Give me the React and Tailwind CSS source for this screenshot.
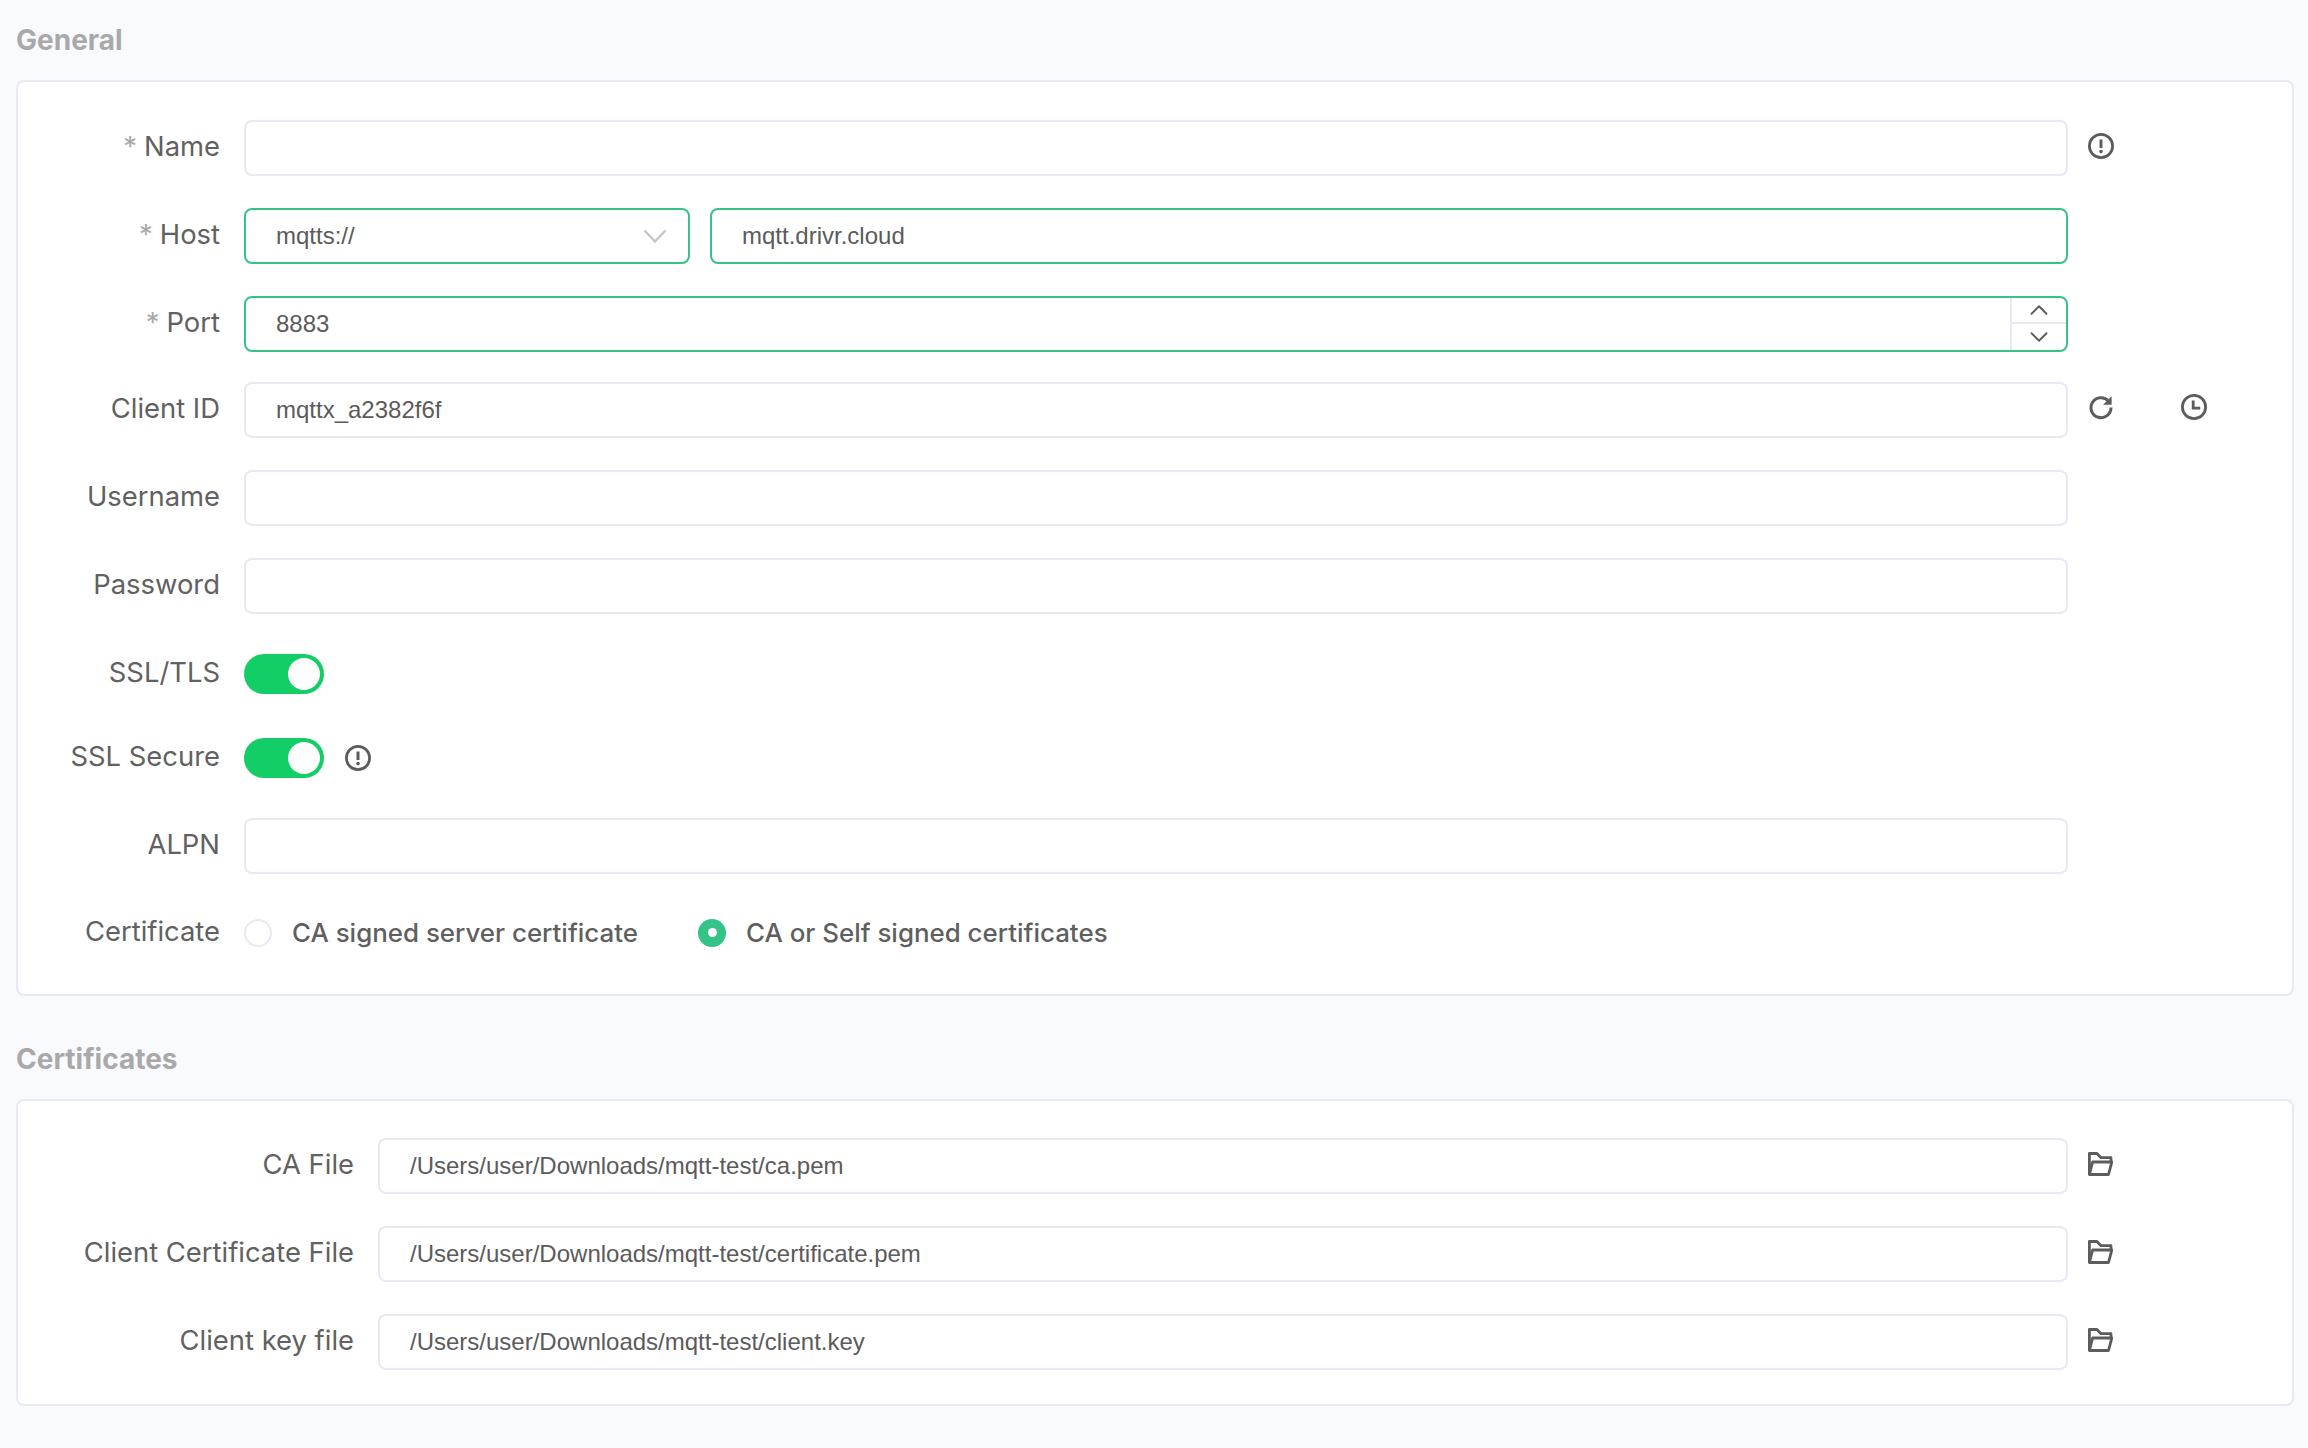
import { ChevronDown, ChevronUp } from 'lucide-react';

function InfoIcon({ className }) {
  return (
    <svg className={className} width="28" height="28" viewBox="0 0 28 28" fill="none" stroke="#5c5c5c" strokeWidth="2.8">
      <circle cx="14" cy="14" r="11.6" />
      <path d="M14 7.5v8.5" strokeWidth="3" />
      <circle cx="14" cy="19.6" r="1.8" fill="#5c5c5c" stroke="none" />
    </svg>
  );
}

function RefreshIcon() {
  return (
    <svg className="-mt-[6px]" width="28" height="28" viewBox="0 0 28 28" fill="none">
      <path d="M21.6 8.2A10 10 0 1 0 24 14.6" stroke="#5c5c5c" strokeWidth="3" />
      <path d="M24.6 3.2v8.6H16z" fill="#5c5c5c" />
    </svg>
  );
}

function ClockIcon() {
  return (
    <svg className="-mt-[6px]" width="28" height="28" viewBox="0 0 28 28" fill="none" stroke="#5c5c5c" strokeWidth="2.8">
      <circle cx="14" cy="14" r="11.6" />
      <path d="M13.2 7.5v7.6h7" strokeWidth="2.8" />
    </svg>
  );
}

function FolderIcon() {
  return (
    <svg className="ml-[1px] -mt-[5px]" width="25" height="24" viewBox="0 0 25 24" fill="none" stroke="#5c5c5c" strokeWidth="2.8" strokeLinejoin="round">
      <path d="M1.4 22.5V1.5H9l4 4.2h10V10" />
      <path d="M1.4 22.5L4.6 10h19.2l-3.3 12.5z" />
    </svg>
  );
}

function Input({ value, active, className }) {
  return (
    <div
      className={`h-[56px] flex items-center pl-[30px] bg-white rounded-lg border-2 font-['Liberation_Sans',sans-serif] text-[24px] text-[#5b5b5b] ${active ? 'border-[#34c388]' : 'border-[#e8eaf3]'} ${className || ''}`}
    >
      {value}
    </div>
  );
}

function Toggle() {
  return (
    <div className="w-[80px] h-[40px] rounded-full bg-[#13ce66] flex items-center justify-end pr-[4px]">
      <div className="w-[32px] h-[32px] rounded-full bg-white" />
    </div>
  );
}

function Label({ children, required, width }) {
  return (
    <div className={`${width} shrink-0 flex justify-end h-[40px] leading-[37px] text-[27.4px] text-[#616161]`}>
      {required && <span className="text-[#a9a9a9] mr-[7px]">*</span>}
      {children}
    </div>
  );
}

function Row({ label, required, labelWidth = 'w-[202px] mr-[24px]', after, className, children }) {
  return (
    <div className={`flex items-center ${className || ''}`}>
      <Label required={required} width={labelWidth}>{label}</Label>
      <div className="flex-1 min-w-0">{children}</div>
      <div className="w-[224px] shrink-0 flex items-center pl-[19px]">{after}</div>
    </div>
  );
}

function Radio({ checked, children, className }) {
  return (
    <div className={`flex items-center ${className || ''}`}>
      {checked ? (
        <div className="w-[28px] h-[28px] rounded-full bg-[#34c388] flex items-center justify-center">
          <div className="w-[9px] h-[9px] rounded-full bg-white" />
        </div>
      ) : (
        <div className="w-[28px] h-[28px] rounded-full border-2 border-[#e8eaf3] bg-white" />
      )}
      <span className="ml-[20px] text-[25.9px] font-medium text-[#5f5f5f]">{children}</span>
    </div>
  );
}

export default function App() {
  return (
    <div className="min-h-screen bg-[#f9fafe] pl-[16px] pr-[14px] pt-[22px] font-['Inter',sans-serif]">
      <h2 className="h-[36px] leading-[36px] text-[28px] font-bold text-[#a9a9a9]">General</h2>
      <section className="mt-[22px] h-[916px] bg-white border-2 border-[#e8eaf3] rounded-lg pt-[38px]">
        <Row label="Name" required className="mb-[32px]" after={<InfoIcon className="-mt-[5px]" />}>
          <Input />
        </Row>
        <Row label="Host" required className="mb-[32px]">
          <div className="flex gap-[20px]">
            <div className="relative w-[446px] shrink-0">
              <Input value="mqtts://" active />
              <svg className="absolute right-[23px] top-[21px]" width="24" height="14" viewBox="0 0 24 14" fill="none" stroke="#c6c6c6" strokeWidth="2.4">
                <path d="M1.5 1.5L12 12.5 22.5 1.5" />
              </svg>
            </div>
            <Input value="mqtt.drivr.cloud" active className="flex-1" />
          </div>
        </Row>
        <Row label="Port" required className="mb-[30px]">
          <div className="relative">
            <Input value="8883" active />
            <div className="absolute right-[2px] top-[2px] bottom-[2px] w-[56px] border-l-2 border-[#e8eaf3] flex flex-col">
              <div className="h-[26px] flex items-center justify-center border-b-2 border-[#e8eaf3]">
                <ChevronUp className="shrink-0" size={30} strokeWidth={1.5} color="#5c5c5c" />
              </div>
              <div className="h-[26px] flex items-center justify-center">
                <ChevronDown className="shrink-0" size={30} strokeWidth={1.5} color="#5c5c5c" />
              </div>
            </div>
          </div>
        </Row>
        <Row
          label="Client ID"
          className="mb-[32px]"
          after={
            <div className="flex items-center gap-[65px]">
              <RefreshIcon />
              <ClockIcon />
            </div>
          }
        >
          <Input value="mqttx_a2382f6f" />
        </Row>
        <Row label="Username" className="mb-[32px]">
          <Input />
        </Row>
        <Row label="Password" className="mb-[40px]">
          <Input />
        </Row>
        <Row label="SSL/TLS" className="mb-[44px]">
          <Toggle />
        </Row>
        <Row label="SSL Secure" className="mb-[40px]">
          <div className="flex items-center gap-[20px]">
            <Toggle />
            <InfoIcon className="-mt-[1px]" />
          </div>
        </Row>
        <Row label="ALPN" className="mb-[39px]">
          <Input />
        </Row>
        <Row label="Certificate">
          <div className="flex items-center">
            <Radio className="w-[454px]">CA signed server certificate</Radio>
            <Radio checked>CA or Self signed certificates</Radio>
          </div>
        </Row>
      </section>
      <h2 className="mt-[45px] h-[36px] leading-[36px] text-[28px] font-bold text-[#a9a9a9]">Certificates</h2>
      <section className="mt-[22px] h-[307px] bg-white border-2 border-[#e8eaf3] rounded-lg pt-[37px]">
        {[
          ['CA File', '/Users/user/Downloads/mqtt-test/ca.pem'],
          ['Client Certificate File', '/Users/user/Downloads/mqtt-test/certificate.pem'],
          ['Client key file', '/Users/user/Downloads/mqtt-test/client.key'],
        ].map(([label, value]) => (
          <Row
            key={label}
            label={label}
            labelWidth="w-[336px] mr-[24px]"
            className="mb-[32px] last:mb-0"
            after={<FolderIcon />}
          >
            <Input value={value} />
          </Row>
        ))}
      </section>
    </div>
  );
}
